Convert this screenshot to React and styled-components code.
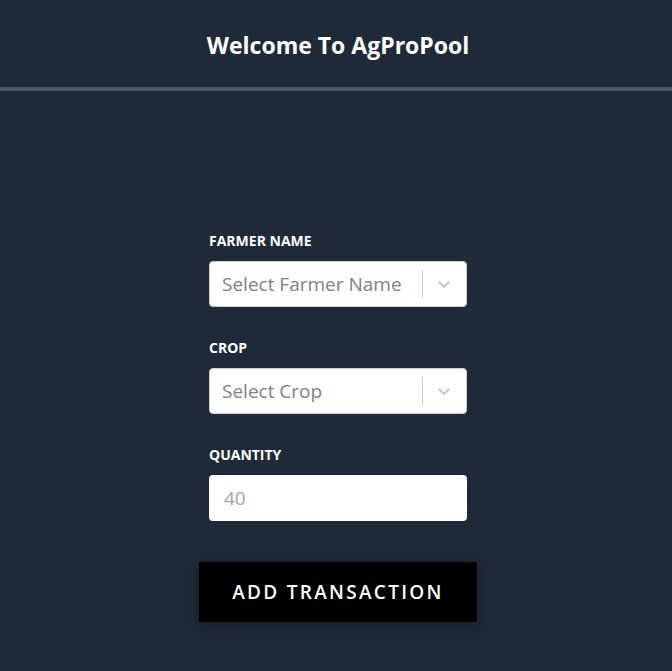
import React from "react";
import styled, { createGlobalStyle } from "styled-components";

const Global = createGlobalStyle`
  html, body { margin: 0; padding: 0; background: #1f2937; }
  body { font-family: "Open Sans", "Noto Sans", sans-serif; }
  * { box-sizing: border-box; }
`;

const Page = styled.div`
  min-height: 671px;
  background: #1f2937;
`;

const Header = styled.header`
  height: 91px;
  border-bottom: 4px solid #4b5563;
  display: flex;
  align-items: center;
  justify-content: center;
  padding-top: 3px;
  padding-left: 4px;
`;

const Title = styled.h1`
  margin: 0;
  color: #ffffff;
  font-size: 23px;
  font-weight: 700;
`;

const Main = styled.main`
  padding-left: 4px;
`;

const Form = styled.form`
  width: 258px;
  margin: 0 auto;
  padding-top: 140px;
  display: flex;
  flex-direction: column;
`;

const Field = styled.div`
  display: flex;
  flex-direction: column;
  margin-bottom: 31px;
`;

const Label = styled.label`
  color: #ffffff;
  font-size: 14px;
  font-weight: 700;
  line-height: 20px;
  height: 20px;
  margin-bottom: 10px;
`;

const SelectBox = styled.div`
  height: 46px;
  background: #ffffff;
  border: 1px solid hsl(0, 0%, 80%);
  border-radius: 4px;
  display: flex;
  align-items: center;
`;

const Placeholder = styled.span`
  flex: 1;
  padding-left: 12px;
  color: hsl(0, 0%, 50%);
  font-size: 19px;
  white-space: nowrap;
  overflow: hidden;
`;

const Separator = styled.span`
  width: 1px;
  align-self: stretch;
  margin: 8px 0;
  background: hsl(0, 0%, 80%);
`;

const Indicator = styled.span`
  display: flex;
  padding: 8px;
  margin-left: 3px;
  margin-right: 4px;
  color: hsl(0, 0%, 80%);
`;

const Input = styled.input`
  height: 46px;
  width: 100%;
  border: none;
  border-radius: 4px;
  background: #ffffff;
  padding: 0 15px;
  font-family: inherit;
  font-size: 19px;
  color: #111827;
  outline: none;
  &::placeholder { color: #9ca3af; }
`;

const ButtonRow = styled.div`
  display: flex;
  justify-content: center;
  margin: 10px -10px 0;
`;

const Button = styled.button`
  width: 278px;
  height: 60px;
  background: #000000;
  color: #ffffff;
  border: none;
  font-family: inherit;
  font-size: 19px;
  font-weight: 600;
  letter-spacing: 2.3px;
  box-shadow: 0 4px 12px rgba(0, 0, 0, 0.25);
  cursor: pointer;
`;

const Chevron = () => (
  <svg width="20" height="20" viewBox="0 0 20 20" fill="currentColor" aria-hidden="true">
    <path d="M4.516 7.548c0.436-0.446 1.043-0.481 1.576 0l3.908 3.747 3.908-3.747c0.533-0.481 1.141-0.446 1.574 0 0.436 0.445 0.408 1.197 0 1.615-0.406 0.418-4.695 4.502-4.695 4.502-0.217 0.223-0.502 0.335-0.787 0.335s-0.57-0.112-0.789-0.335c0 0-4.287-4.084-4.695-4.502s-0.436-1.17 0-1.615z" />
  </svg>
);

const Select = ({ placeholder }) => (
  <SelectBox>
    <Placeholder>{placeholder}</Placeholder>
    <Separator />
    <Indicator>
      <Chevron />
    </Indicator>
  </SelectBox>
);

export default function App() {
  return (
    <Page>
      <Global />
      <Header>
        <Title>Welcome To AgProPool</Title>
      </Header>
      <Main>
        <Form onSubmit={(e) => e.preventDefault()}>
          <Field>
            <Label>FARMER NAME</Label>
            <Select placeholder="Select Farmer Name" />
          </Field>
          <Field>
            <Label>CROP</Label>
            <Select placeholder="Select Crop" />
          </Field>
          <Field>
            <Label>QUANTITY</Label>
            <Input type="number" placeholder="40" />
          </Field>
          <ButtonRow>
            <Button type="submit">ADD TRANSACTION</Button>
          </ButtonRow>
        </Form>
      </Main>
    </Page>
  );
}
